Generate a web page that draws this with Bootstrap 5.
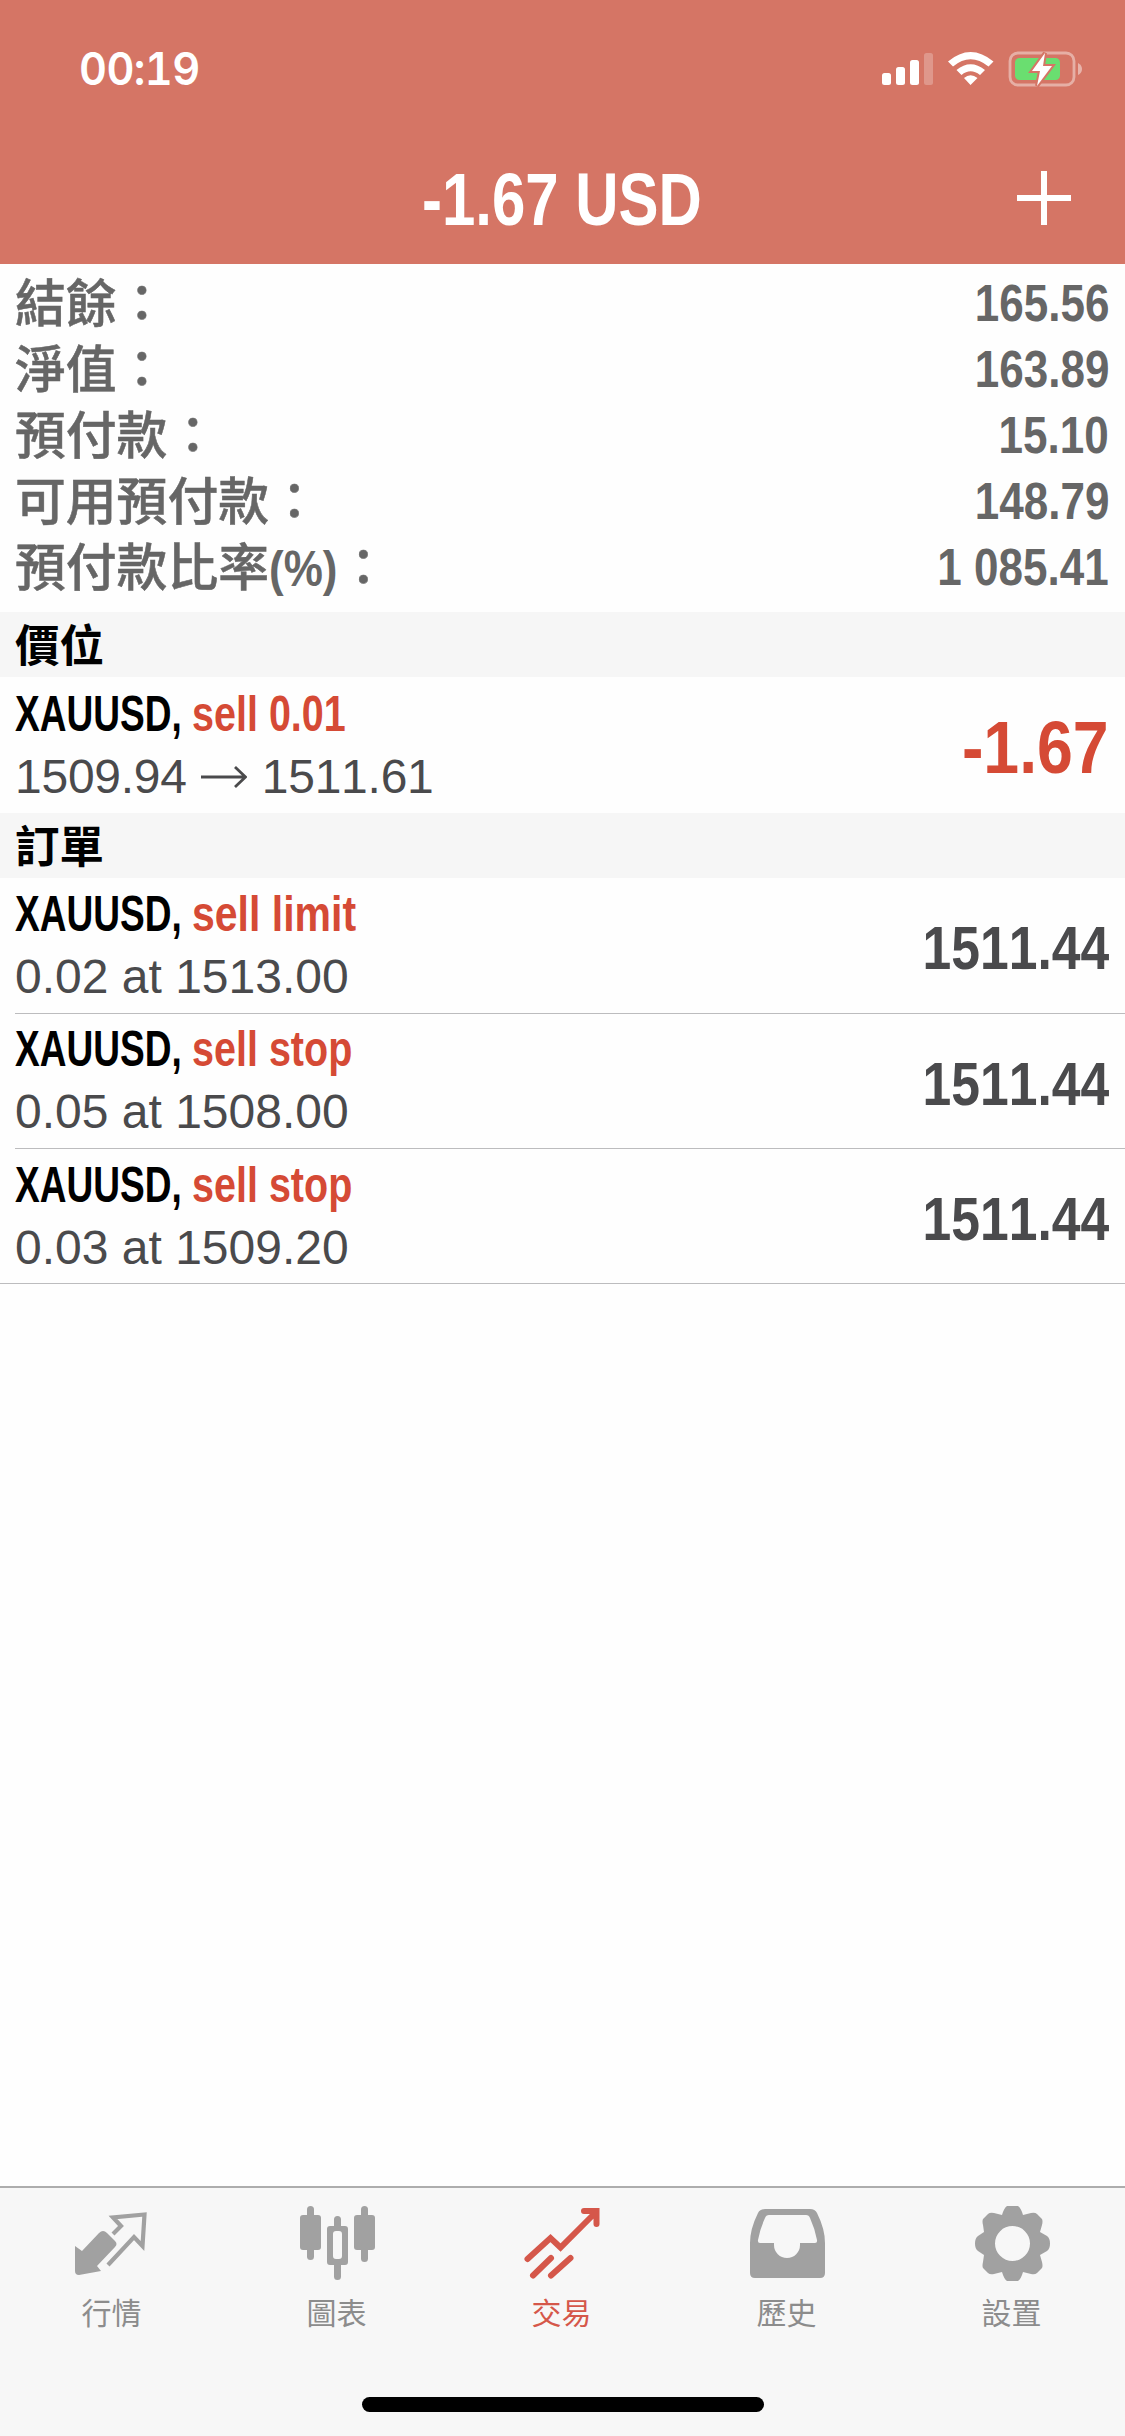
<!DOCTYPE html>
<html lang="zh-Hant">
<head>
<meta charset="utf-8">
<meta name="viewport" content="width=device-width, initial-scale=1">
<title>-1.67 USD</title>
<link href="https://cdn.jsdelivr.net/npm/bootstrap@5.3.0/dist/css/bootstrap.min.css" rel="stylesheet">
<style>
body{background:#fefefe;font-family:"Liberation Sans","Noto Sans CJK TC",sans-serif;width:1125px;height:2436px;overflow:hidden}
.cjk{font-family:"Noto Sans CJK TC",sans-serif}
.top-area{background:#d57565;height:264px;color:#fff}
.status-row{height:138px;padding:0 41px 0 79px}
.clock{font:600 45.5px/1 Inter,sans-serif;font-feature-settings:"tnum";letter-spacing:-.6px;transform:scaleX(.95);transform-origin:left}
.title-row{height:126px;padding:0 53px}
.title-row svg{margin-top:-6px}
.balance-box{width:56px}
.title-text{font-size:74.5px;line-height:1;font-weight:700;font-kerning:none;transform:scaleX(.805);margin:-2px 2px 0 0}
.summary-list{padding:5px 16px 0;height:348px;color:#666}
.summary-item{height:66px;font-weight:700}
.summary-item .cjk{font-size:50.8px;line-height:60px;font-weight:500;-webkit-text-stroke:.5px #666;margin:-4px 0 0 -1px}
.summary-item:last-child .cjk{margin-top:0}
.num{font-size:51.8px;line-height:1;font-kerning:none;margin-top:3px;transform:scaleX(.85);transform-origin:right}
.pct{display:inline-block;width:69px;font-family:"Liberation Sans",sans-serif;font-weight:700;white-space:nowrap;-webkit-text-stroke:0}
.pct span{display:inline-block;transform:scaleX(.88);transform-origin:left;font-size:50px;line-height:1}
.sect{height:65px;background:#f6f6f6;color:#000;font-size:44.5px;line-height:61px;font-weight:700;padding-left:15px}
.deal{height:135.3px;padding-right:16px;margin-left:15px;color:#4a4a4c;border-bottom:1.5px solid #bcbcbe}
.deal.position{height:136.4px;border:0}
.deal.final{margin-left:0;padding-left:15px}
.deal-name{font-size:49.4px;line-height:56px;font-weight:700;height:56px;white-space:nowrap}
.sym{width:177px;color:#000}
.sym span,.side{display:inline-block;transform-origin:left}
.sym span{transform:scaleX(.75)}
.side{color:#d54a35;transform:scaleX(.8)}
.side.limit{transform:scaleX(.83)}
.detail{font-size:48px;line-height:56px;margin-top:7px;white-space:pre;font-kerning:none}
.position .detail{letter-spacing:-.25px}
.arrow{width:46px;height:24px;margin:0 15px 0 14px}
.amount{font-size:61.5px;line-height:1;font-weight:700;font-kerning:none;margin-top:5px;transform:scaleX(.84);transform-origin:right}
.amount.loss{font-size:74px;color:#d54a35;transform:scaleX(.87)}
.tabs{height:250px;background:#f7f7f7;border-top:2px solid #adadad}
.tab{width:225px;padding:13px 2px 0 0;color:#8c8c8c;font-size:30px;line-height:40px}
.tab svg{width:84px;height:84px;color:#a1a1a1;margin-bottom:6px}
.tab.on,.tab.on svg{color:#d5574a}
.home{width:402px;height:15px;border-radius:8px;background:#000;margin-bottom:24px}
</style>
</head>
<body class="d-flex flex-column">
<header class="top-area">
  <div class="status-row d-flex justify-content-between align-items-center">
    <span class="clock">00:19</span>
    <svg width="206" height="40" viewBox="878 49 206 40" fill="#fff">
      <rect x="882" y="73" width="9" height="12" rx="2.5"/><rect x="896" y="67" width="9" height="18" rx="2.5"/><rect x="910" y="60" width="9" height="25" rx="2.5"/><rect x="924" y="53" width="9" height="32" rx="2.5" opacity=".25"/>
      <path d="M948 61.500Q970.500 42.500 993.500 61.500L988.500 66.500Q970.500 52 953 66.500ZM956.500 70Q970.500 58.500 985 70L980 75Q970.500 67.500 961.500 75ZM964 78Q970.500 72.500 977.500 78L970.500 85Z"/>
      <rect x="1010" y="53" width="64" height="32" rx="8" fill="none" stroke="#fff" stroke-width="2.800" opacity=".42"/>
      <path d="M1078 63Q1082 65 1082 69T1078 75Z" opacity=".45"/>
      <rect x="1015" y="58" width="45" height="22" rx="4.500" fill="#6ade70"/>
      <path d="M1045 53L1032 71H1040L1037 86L1052 66H1043Z" stroke="#d57565" stroke-width="4"/><path d="M1045 53L1032 71H1040L1037 86L1052 66H1043Z"/>
    </svg>
  </div>
  <div class="title-row d-flex align-items-center justify-content-between">
    <span class="balance-box"></span>
    <h1 class="title-text">-1.67 USD</h1>
    <svg width="56" height="56" viewBox="0 0 56 56" fill="none" stroke="#fff" stroke-width="6"><path d="M1 28H55M28 1V55"/></svg>
  </div>
</header>

<main class="flex-grow-1">
  <section class="summary-list">
    <div class="summary-item d-flex justify-content-between align-items-center"><span class="cjk">結餘：</span><span class="num">165.56</span></div>
    <div class="summary-item d-flex justify-content-between align-items-center"><span class="cjk">淨值：</span><span class="num">163.89</span></div>
    <div class="summary-item d-flex justify-content-between align-items-center"><span class="cjk">預付款：</span><span class="num">15.10</span></div>
    <div class="summary-item d-flex justify-content-between align-items-center"><span class="cjk">可用預付款：</span><span class="num">148.79</span></div>
    <div class="summary-item d-flex justify-content-between align-items-center"><span class="cjk">預付款比率<span class="pct"><span>(%)</span></span>：</span><span class="num">1 085.41</span></div>
  </section>

  <div class="sect cjk">價位</div>
  <div class="deal position d-flex justify-content-between align-items-center">
    <div>
      <div class="deal-name d-flex"><span class="sym"><span>XAUUSD,</span></span><span class="side">sell 0.01</span></div>
      <div class="detail d-flex align-items-center">1509.94<svg class="arrow" viewBox="0 0 46 24" fill="none" stroke="currentColor" stroke-width="2.800"><path d="M0 12H44M34 2L44.500 12L34 22"/></svg>1511.61</div>
    </div>
    <span class="amount loss">-1.67</span>
  </div>

  <div class="sect cjk">訂單</div>
  <div class="deal d-flex justify-content-between align-items-center">
    <div>
      <div class="deal-name d-flex"><span class="sym"><span>XAUUSD,</span></span><span class="side limit">sell limit</span></div>
      <div class="detail">0.02 at 1513.00</div>
    </div>
    <span class="amount">1511.44</span>
  </div>
  <div class="deal d-flex justify-content-between align-items-center">
    <div>
      <div class="deal-name d-flex"><span class="sym"><span>XAUUSD,</span></span><span class="side">sell stop</span></div>
      <div class="detail">0.05 at 1508.00</div>
    </div>
    <span class="amount">1511.44</span>
  </div>
  <div class="deal final d-flex justify-content-between align-items-center">
    <div>
      <div class="deal-name d-flex"><span class="sym"><span>XAUUSD,</span></span><span class="side">sell stop</span></div>
      <div class="detail">0.03 at 1509.20</div>
    </div>
    <span class="amount">1511.44</span>
  </div>
</main>

<footer class="tabs d-flex flex-column justify-content-between align-items-center">
  <nav class="d-flex cjk">
    <div class="tab d-flex flex-column align-items-center">
      <svg viewBox="0 0 84 84" fill="currentColor"><path d="M5 45L12 50L29 32Q33 28 37 32L45 40Q48 43 45 46L27 65L31 70L9 74Q5 74 5 70Z"/><path d="M43 33L51 25L43 16.500L74.500 13.500L72.500 45L64 36L38 64" fill="none" stroke="currentColor" stroke-width="4.200"/></svg>
      <span>行情</span>
    </div>
    <div class="tab d-flex flex-column align-items-center">
      <svg viewBox="0 0 84 84" fill="currentColor"><rect x="5" y="14" width="21" height="35" rx="3"/><rect x="12" y="5" width="7" height="54" rx="3.500"/><rect x="59" y="14" width="21" height="35" rx="3"/><rect x="66" y="5" width="7" height="56" rx="3.500"/><path d="M32 28Q32 25 35 25H39V18.500Q39 15 42.500 15T46 18.500V25H50Q53 25 53 28V61Q53 64 50 64H46V75.500Q46 79 42.500 79T39 75.500V64H35Q32 64 32 61ZM38 33V55Q38 58 41 58H44Q47 58 47 55V33Q47 30 44 30H41Q38 30 38 33Z" fill-rule="evenodd"/></svg>
      <span>圖表</span>
    </div>
    <div class="tab on d-flex flex-column align-items-center">
      <svg viewBox="0 0 84 84" fill="none" stroke="currentColor" stroke-width="6" stroke-linecap="round" stroke-linejoin="miter"><path d="M7.500 58L30.500 37L40.500 46.500L75 12M64 10H76.500V23M13 74.500L31 57M31 74.500L50.500 57"/></svg>
      <span>交易</span>
    </div>
    <div class="tab d-flex flex-column align-items-center">
      <svg viewBox="0 0 84 84" fill="currentColor" fill-rule="evenodd"><path d="M20 8H65Q70 8 72 12Q80 28 80 42V72Q80 77 75 77H10Q5 77 5 72V42Q5 28 13 12Q15 8 20 8ZM24 14Q21 14 20 17Q15 28 13 39Q12.500 42 15 42H29V44A13 13 0 0 0 55 44V42H70Q72.500 42 72 39Q70 28 65 17Q64 14 61 14Z"/></svg>
      <span>歷史</span>
    </div>
    <div class="tab d-flex flex-column align-items-center">
      <svg viewBox="0 0 84 84" fill="currentColor" fill-rule="evenodd"><path d="M37 5H48Q51 7 53 14L61 12Q65 11 67 13L72 18Q73 20 72 24L70 31L77 35Q80 37 80 42.500T77 50L70 54L72 61Q73 65 72 67L67 72Q65 74 61 73L53 71Q51 78 48 80H37Q34 78 32 71L24 73Q20 74 18 72L13 67Q12 65 13 61L14 54L8 50Q5 48 5 42.500T8 35L14 31L13 24Q12 20 13 18L18 13Q20 11 24 12L32 14Q34 7 37 5ZM42.500 25A17.500 17.500 0 1 0 42.500 60A17.500 17.500 0 1 0 42.500 25Z" transform="translate(0 0)"/></svg>
      <span>設置</span>
    </div>
  </nav>
  <div class="home"></div>
</footer>
<script src="https://cdn.jsdelivr.net/npm/bootstrap@5.3.0/dist/js/bootstrap.bundle.min.js"></script>
</body>
</html>
